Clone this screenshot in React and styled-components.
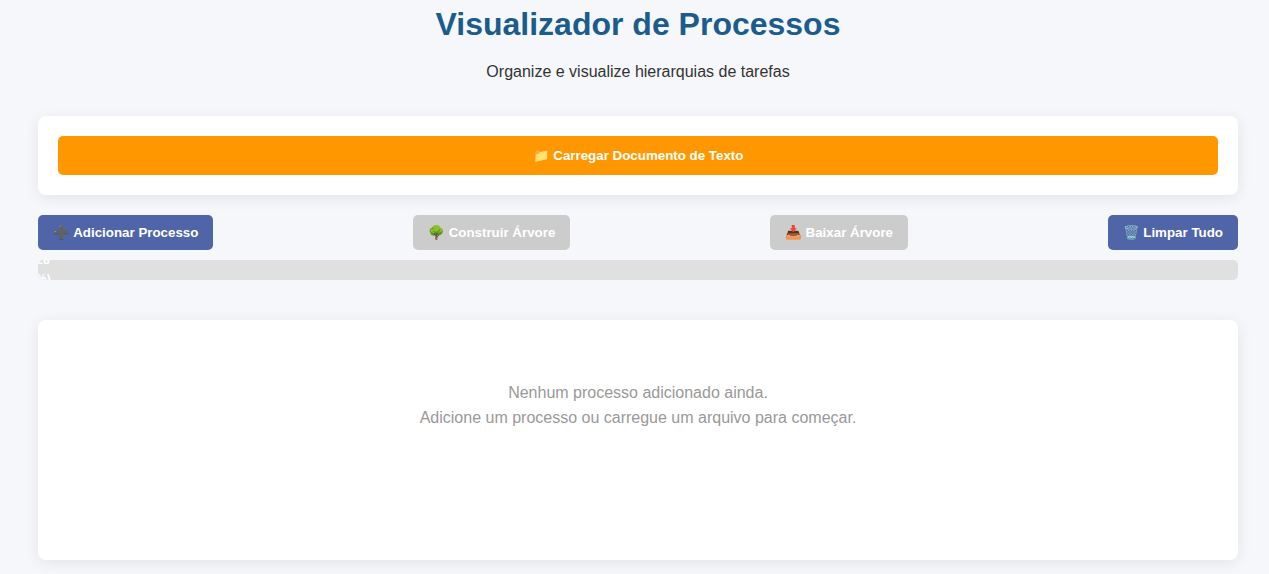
import React from "react";
import styled, { createGlobalStyle } from "styled-components";

const GlobalStyle = createGlobalStyle`
  *, *::before, *::after { box-sizing: border-box; }
  body {
    margin: 0;
    background: #f5f7fb;
    color: #333;
    font-family: "Liberation Sans", Arial, sans-serif;
    font-size: 16px;
    line-height: 24px;
  }
`;

const Page = styled.main`
  padding: 0 31px 14px 38px;
`;

const Header = styled.header`
  text-align: center;
  margin-bottom: 32px;
`;

const Title = styled.h1`
  margin: 0 0 12px;
  font-size: 32px;
  line-height: 48px;
  color: #1c5c8c;
`;

const Subtitle = styled.p`
  margin: 0;
`;

const Card = styled.section`
  background: #fff;
  border-radius: 8px;
  padding: 20px;
  box-shadow: 0 3px 15px rgba(0, 0, 0, 0.08);
`;

/* Buttons keep the browser's own text size. */
const Button = styled.button`
  border: 0;
  border-radius: 5px;
  padding: 10px 15px;
  background: #5065a8;
  color: #fff;
  font-family: inherit;
  font-weight: bold;
  line-height: 15px;
  cursor: pointer;

  &:disabled {
    background: #ccc;
    cursor: not-allowed;
  }
`;

const UploadButton = styled(Button)`
  display: block;
  width: 100%;
  padding: 12px 15px;
  background: #ff9800;
`;

const Controls = styled.div`
  display: flex;
  flex-wrap: wrap;
  justify-content: space-between;
  gap: 10px;
  margin: 20px 0 10px;
`;

const ProgressTrack = styled.div`
  height: 20px;
  margin-bottom: 40px;
  border-radius: 5px;
  background: #e0e0e0;
  overflow: hidden;
`;

const ProgressFill = styled.div`
  display: flex;
  align-items: center;
  justify-content: center;
  height: 100%;
  background: #4caf50;
  color: #fff;
  font-size: 12px;
  font-weight: bold;
  line-height: 19px;
  text-align: center;
`;

const TreePanel = styled(Card)`
  min-height: 240px;
`;

const EmptyMessage = styled.p`
  margin: 0;
  padding: 40px;
  color: #999;
  line-height: 25px;
  text-align: center;
`;

const actions = [
  { label: "➕ Adicionar Processo" },
  { label: "🌳 Construir Árvore", disabled: true },
  { label: "📥 Baixar Árvore", disabled: true },
  { label: "🗑️ Limpar Tudo" },
];

export default function App() {
  const done = 0;
  const total = 28;
  const percent = Math.round((done / total) * 100);

  return (
    <>
      <GlobalStyle />
      <Page>
        <Header>
          <Title>Visualizador de Processos</Title>
          <Subtitle>Organize e visualize hierarquias de tarefas</Subtitle>
        </Header>
        <Card>
          <UploadButton type="button">📁 Carregar Documento de Texto</UploadButton>
        </Card>
        <Controls>
          {actions.map(({ label, disabled }) => (
            <Button key={label} type="button" disabled={disabled}>
              {label}
            </Button>
          ))}
        </Controls>
        <ProgressTrack
          role="progressbar"
          aria-label="Progresso"
          aria-valuemin={0}
          aria-valuemax={total}
          aria-valuenow={done}
        >
          <ProgressFill style={{ width: `${percent}%` }}>
            {`${done}/${total} (${percent}%)`}
          </ProgressFill>
        </ProgressTrack>
        <TreePanel>
          <EmptyMessage>
            Nenhum processo adicionado ainda.
            <br />
            Adicione um processo ou carregue um arquivo para começar.
          </EmptyMessage>
        </TreePanel>
      </Page>
    </>
  );
}
